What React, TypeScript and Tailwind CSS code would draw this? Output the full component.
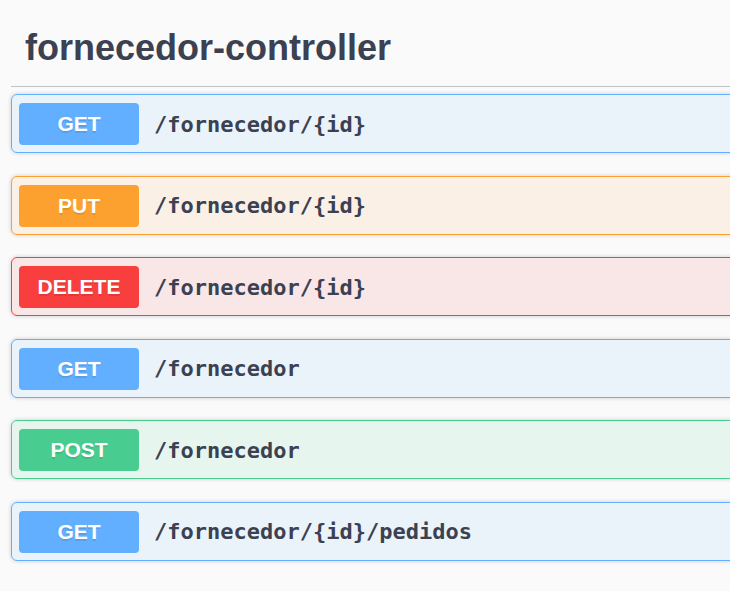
import React from 'react';

type Op = {
    method: 'GET' | 'PUT' | 'DELETE' | 'POST';
    path: string;
};

const ops: Op[] = [
    { method: 'GET', path: '/fornecedor/{id}' },
    { method: 'PUT', path: '/fornecedor/{id}' },
    { method: 'DELETE', path: '/fornecedor/{id}' },
    { method: 'GET', path: '/fornecedor' },
    { method: 'POST', path: '/fornecedor' },
    { method: 'GET', path: '/fornecedor/{id}/pedidos' },
];

const styles = {
    GET: { row: 'border-[#61affe] bg-[#61affe]/10', badge: 'bg-[#61affe]' },
    PUT: { row: 'border-[#fca130] bg-[#fca130]/10', badge: 'bg-[#fca130]' },
    DELETE: { row: 'border-[#f93e3e] bg-[#f93e3e]/10', badge: 'bg-[#f93e3e]' },
    POST: { row: 'border-[#49cc90] bg-[#49cc90]/10', badge: 'bg-[#49cc90]' },
};

const OpBlock: React.FC<{ op: Op }> = ({ op }) => {
    const s = styles[op.method];
    return (
        <div
            className={`mb-[22.5px] flex items-center rounded-[6px] border pl-[7px] pt-[8px] pb-[7px] shadow-[0_0_4px_rgba(0,0,0,0.19)] ${s.row}`}
        >
            <span
                className={`flex h-[42px] w-[120px] items-center justify-center rounded-[4px] text-[21px] font-bold text-white [text-shadow:0_1.5px_0_rgba(0,0,0,0.1)] font-['Liberation_Sans',Arial,sans-serif] ${s.badge}`}
            >
                {op.method}
            </span>
            <span className="ml-[15px] text-[22px] font-bold text-[#3b4151] font-['DejaVu_Sans_Mono',monospace]">
                {op.path}
            </span>
        </div>
    );
};

export default function App() {
    return (
        <div className="min-h-screen w-full overflow-hidden bg-[#fafafa]">
            <div className="w-[1000px] pl-[11px]">
                {/* Tag header */}
                <h4 className="mb-[7px] border-b border-[#3b4151]/30 pl-[14px] pt-[30px] pb-[20px] text-[36px] leading-[36px] font-bold text-[#3b4151] font-['Liberation_Sans',Arial,sans-serif]">
                    fornecedor-controller
                </h4>

                {/* Operations */}
                {ops.map((op, i) => (
                    <OpBlock key={i} op={op} />
                ))}
            </div>
        </div>
    );
}
